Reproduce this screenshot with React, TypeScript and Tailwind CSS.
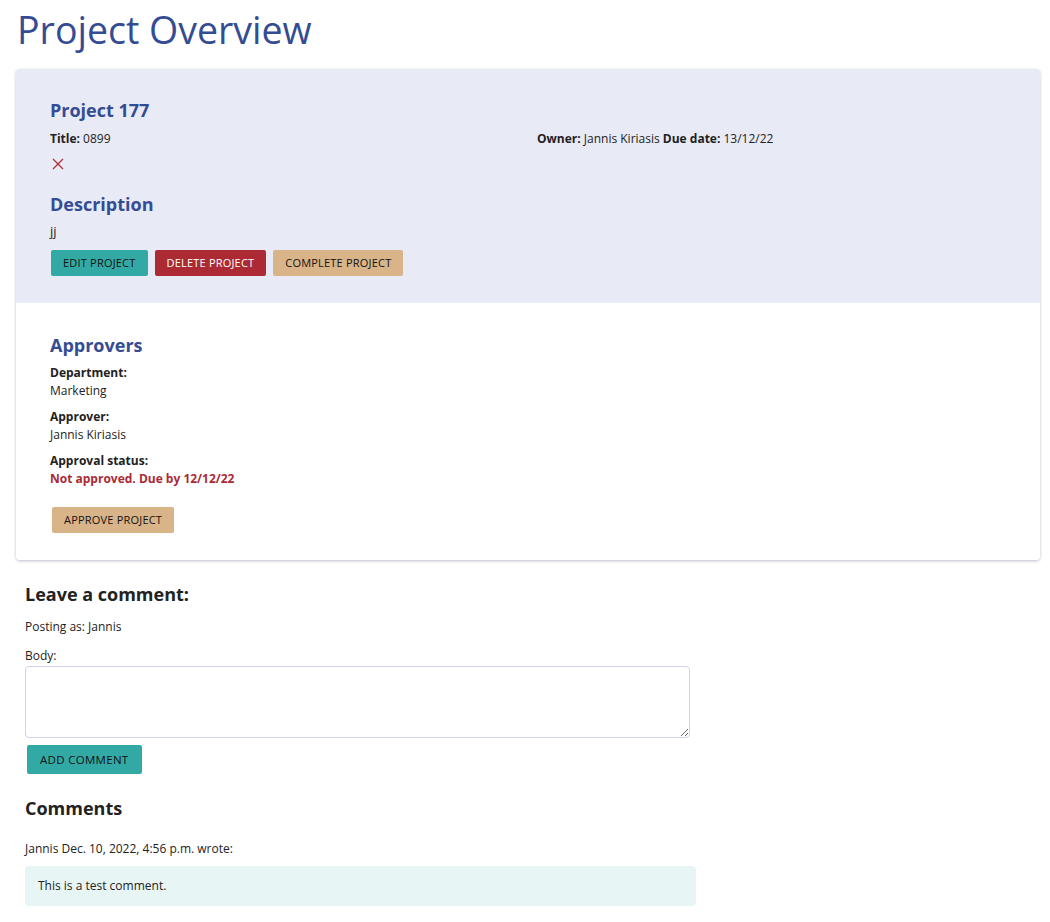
import React from "react";

export default function App() {
  return (
    <div className="min-h-[922px] bg-white text-[#222] font-['Open_Sans',sans-serif]">
      <h1 className="px-[17px] pt-[5px] text-[37.5px] leading-[50px] text-[#344c94] font-normal">Project Overview</h1>
      <div className="mx-[16px] mt-[14px] w-[1024px] rounded-[4px] shadow-[0_1px_3px_rgba(60,60,110,0.35)] overflow-hidden">
        <div className="bg-[#e8eaf6] px-[34px] pt-[27px] pb-[27px]">
          <h2 className="text-[18px] font-bold text-[#344c94] leading-[28px]">Project 177</h2>
          <div className="flex mt-[6px] text-[12px] leading-[18px]">
            <div className="w-[487px]">
              <span className="font-bold">Title:</span> 0899
            </div>
            <div>
              <span className="font-bold">Owner:</span> Jannis Kiriasis <span className="font-bold">Due date:</span> 13/12/22
            </div>
          </div>
          <div className="mt-[7px] ml-[2px] h-[18px] flex items-center">
            <svg width="12" height="12" viewBox="0 0 12 12" className="text-[#b4333c]">
              <path d="M1 1L11 11M11 1L1 11" stroke="currentColor" strokeWidth="1.4" />
            </svg>
          </div>
          <h2 className="mt-[17px] text-[18px] font-bold text-[#344c94] leading-[28px]">Description</h2>
          <p className="mt-[3px] text-[13px] leading-[20px]">jj</p>
          <div className="flex gap-[7px] mt-[9px] ml-[1px]">
            <button className="h-[26px] px-[12px] rounded-[2px] bg-[#33a9a5] text-[11px] uppercase tracking-[0.2px] text-[#111]">Edit project</button>
            <button className="h-[26px] px-[12px] rounded-[2px] bg-[#ab2a34] text-[11px] uppercase tracking-[0.2px] text-white">Delete project</button>
            <button className="h-[26px] px-[12px] rounded-[2px] bg-[#d9b489] text-[11px] uppercase tracking-[0.2px] text-[#111]">Complete project</button>
          </div>
        </div>
        <div className="bg-white px-[34px] pt-[28px] pb-[27px]">
          <h2 className="text-[18px] font-bold text-[#344c94] leading-[28px]">Approvers</h2>
          <div className="mt-[5px] text-[12px] leading-[18px]">
            <div className="font-bold">Department:</div>
            <div>Marketing</div>
            <div className="font-bold mt-[8px]">Approver:</div>
            <div>Jannis Kiriasis</div>
            <div className="font-bold mt-[8px]">Approval status:</div>
            <div className="font-bold text-[#ab2a34]">Not approved. Due by 12/12/22</div>
          </div>
          <button className="mt-[19px] ml-[2px] h-[26px] px-[12px] rounded-[2px] bg-[#d9b489] text-[11px] uppercase tracking-[0.2px] text-[#111]">Approve project</button>
        </div>
      </div>
      <div className="px-[25px]">
        <h3 className="mt-[21px] text-[18px] font-bold leading-[26px]">Leave a comment:</h3>
        <p className="mt-[11px] text-[12px] leading-[18px]">Posting as: Jannis</p>
        <p className="mt-[11px] text-[12px] leading-[18px]">Body:</p>
        <textarea className="block mt-[1px] w-[665px] h-[72px] rounded-[4px] border border-[#cfd3ea] resize-y" />
        <button className="mt-[7px] ml-[2px] h-[29px] px-[13px] rounded-[2px] bg-[#33a9a5] text-[11.5px] uppercase tracking-[0.3px] text-[#111]">Add comment</button>
        <h3 className="mt-[21px] text-[18px] font-bold leading-[26px]">Comments</h3>
        <p className="mt-[19px] text-[12px] leading-[18px]">Jannis Dec. 10, 2022, 4:56 p.m. wrote:</p>
        <div className="mt-[8px] w-[671px] h-[40px] rounded-[4px] bg-[#e8f5f5] px-[13px] flex items-center text-[12px]">This is a test comment.</div>
      </div>
    </div>
  );
}
